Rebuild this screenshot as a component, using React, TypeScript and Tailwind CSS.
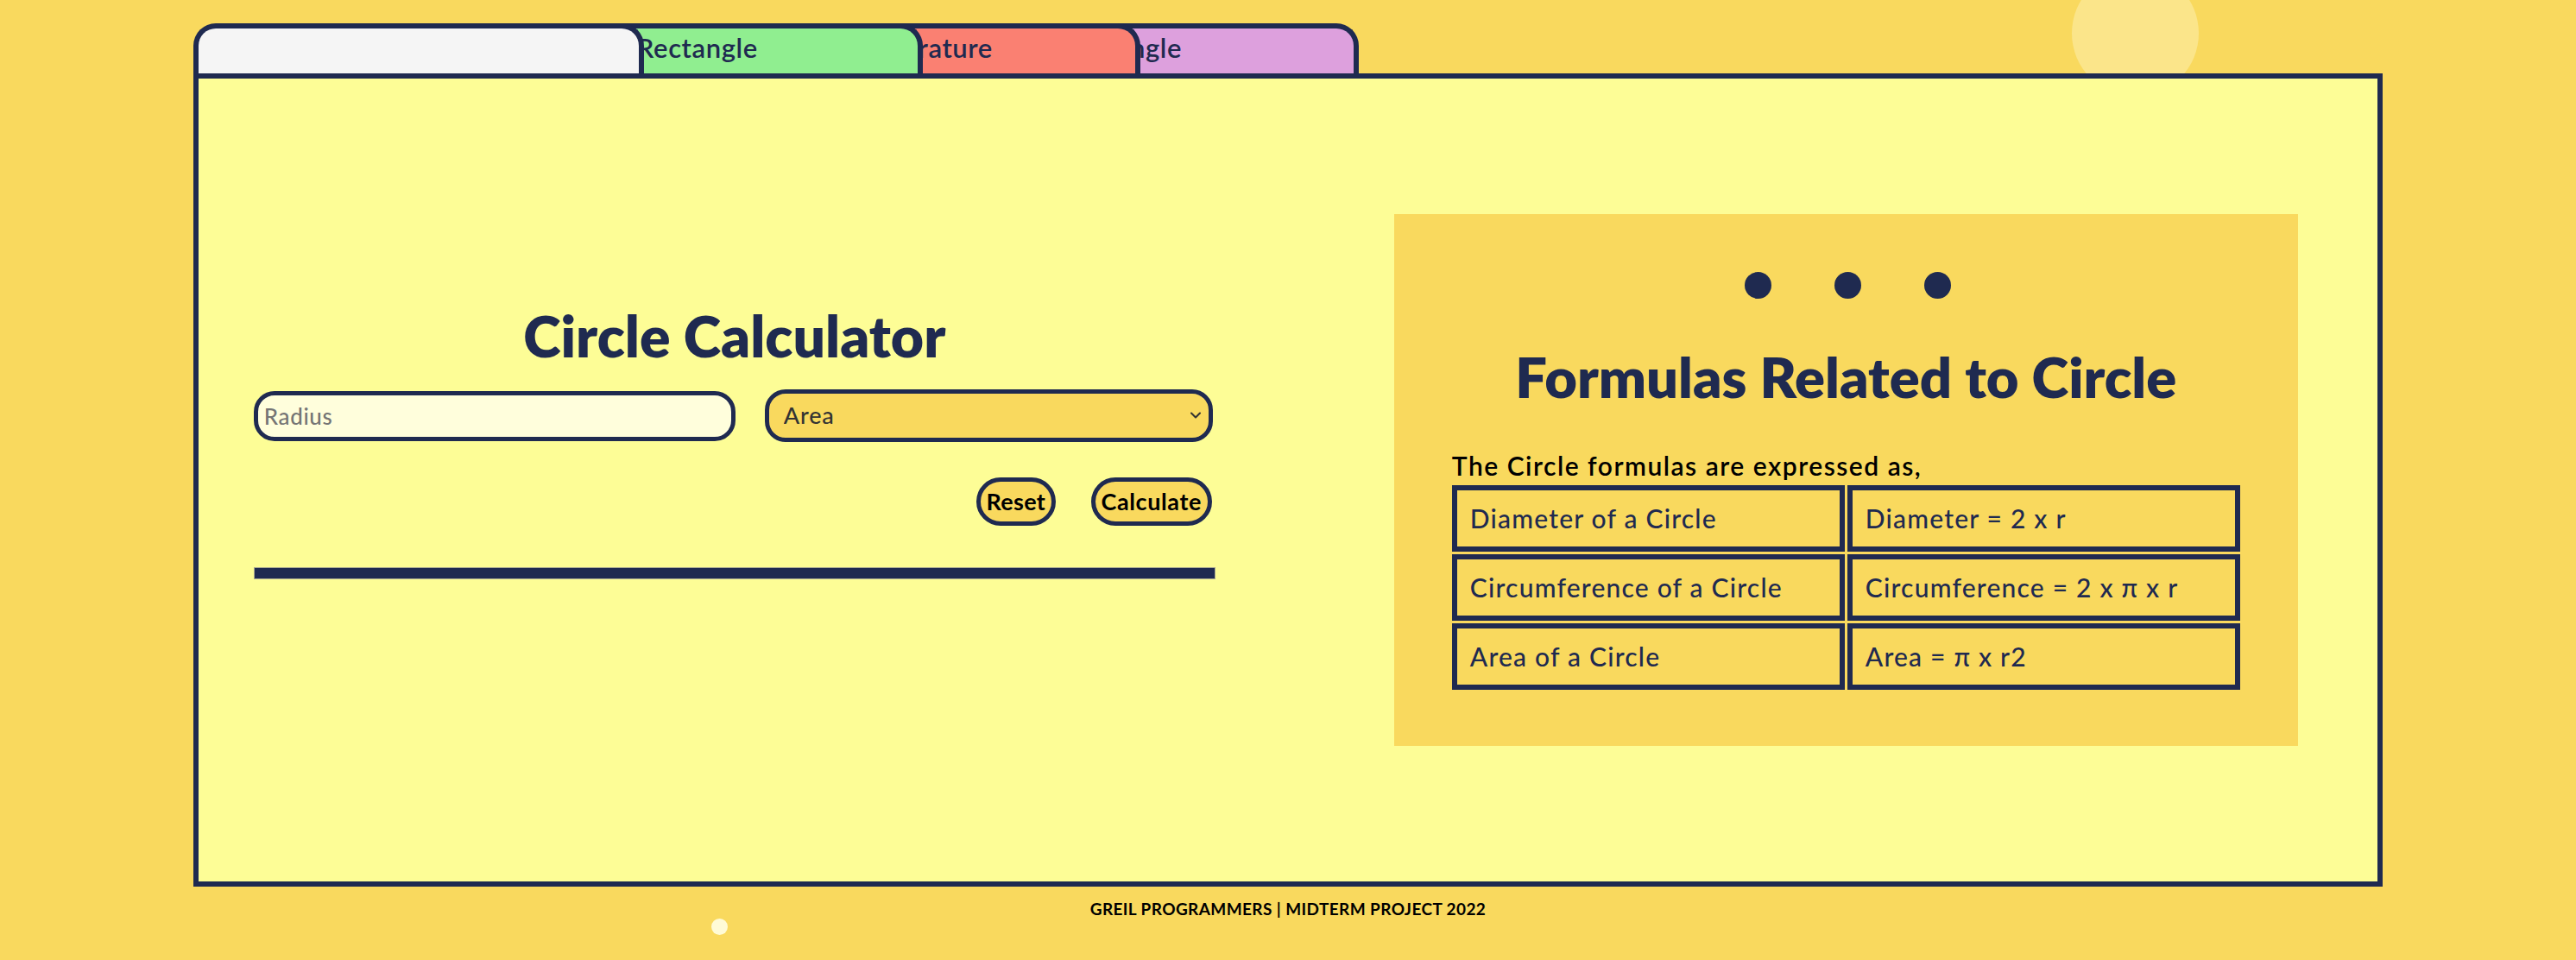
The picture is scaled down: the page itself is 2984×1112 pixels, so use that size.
import { ChevronDown } from "lucide-react";

const FORMULAS = [
  ["Diameter of a Circle", "Diameter = 2 x r"],
  ["Circumference of a Circle", "Circumference = 2 x π x r"],
  ["Area of a Circle", "Area = π x r2"],
];

function Tabs() {
  return (
    <div className="flex h-[58px]">
      <div className="z-40 w-[522px] shrink-0 rounded-t-[26px] border-[6px] border-b-0 border-[#1f2a50] bg-[#f5f5f5]" />
      <div className="z-30 -ml-[199px] flex w-[522px] shrink-0 items-center justify-center rounded-t-[26px] border-[6px] border-b-0 border-[#1f2a50] bg-[#90ee90] pb-[8px] text-[31px] font-semibold tracking-[0.6px] text-[#1f2a50]">
        Rectangle
      </div>
      <div className="z-20 -ml-[270px] flex w-[522px] shrink-0 items-center justify-center rounded-t-[26px] border-[6px] border-b-0 border-[#1f2a50] bg-[#fa8072] pb-[8px] text-[31px] font-semibold tracking-[0.6px] text-[#1f2a50]">
        Temperature
      </div>
      <div className="z-10 -ml-[269px] flex w-[522px] shrink-0 items-center justify-center rounded-t-[26px] border-[6px] border-b-0 border-[#1f2a50] bg-[#dda0dd] pb-[8px] text-[31px] font-semibold tracking-[0.6px] text-[#1f2a50]">
        Triangle
      </div>
    </div>
  );
}

function Calculator() {
  return (
    <div className="flex w-[1114px] shrink-0 flex-col">
      <h1 className="text-center text-[66px] font-extrabold leading-[72px] text-[#1f2a50]">Circle Calculator</h1>
      <div className="mt-[26px] flex items-center gap-[34px]">
        <input
          placeholder="Radius"
          className="h-[58px] w-[558px] rounded-[24px] border-[5px] border-[#1f2a50] bg-[#fffedc] pl-[7px] text-[26px] font-medium tracking-[0.6px] text-[#1f2a50] outline-none placeholder:text-[#757575]"
        />
        <div className="relative w-[519px]">
          <select className="h-[61px] w-full appearance-none rounded-[24px] border-[5px] border-[#1f2a50] bg-[#f9d95e] pl-[17px] text-[27px] font-medium tracking-[0.8px] text-[#333] outline-none">
            <option>Area</option>
            <option>Circumference</option>
            <option>Diameter</option>
          </select>
          <ChevronDown className="pointer-events-none absolute right-[10px] top-[20px] text-[#333]" size={20} strokeWidth={2.5} />
        </div>
      </div>
      <div className="mt-[41px] flex justify-end gap-[41px] pr-[4px]">
        <button className="h-[56px] w-[92px] rounded-full border-[5px] border-[#1f2a50] bg-[#f9d95e] text-[27px] font-bold tracking-[0.3px] text-black">
          Reset
        </button>
        <button className="h-[56px] w-[140px] rounded-full border-[5px] border-[#1f2a50] bg-[#f9d95e] text-[27px] font-bold tracking-[0.6px] text-black">
          Calculate
        </button>
      </div>
      <div className="mt-[48px] h-[14px] border border-[#a8a890] bg-[#1f2a50]" />
      <div className="h-[88px]" />
    </div>
  );
}

function FormulaBox() {
  return (
    <div className="flex h-[616px] w-[1047px] shrink-0 flex-col items-center bg-[#f9d95e] pt-[67px]">
      <div className="flex gap-[73px] pl-[4px]">
        <span className="h-[31px] w-[31px] rounded-full bg-[#1f2a50]" />
        <span className="h-[31px] w-[31px] rounded-full bg-[#1f2a50]" />
        <span className="h-[31px] w-[31px] rounded-full bg-[#1f2a50]" />
      </div>
      <h2 className="mt-[54px] text-[65px] font-extrabold leading-[72px] text-[#1f2a50]">Formulas Related to Circle</h2>
      <div className="mt-[51px] w-[913px]">
        <p className="text-[30px] font-semibold leading-[32px] tracking-[1.5px] text-black">The Circle formulas are expressed as,</p>
        <div className="mt-[7px] grid grid-cols-2 gap-[3px]">
          {FORMULAS.flat().map((cell, i) => (
            <div
              key={i}
              className="flex h-[77px] items-center border-[6px] border-[#1f2a50] pl-[15px] text-[30px] font-medium tracking-[1.2px] text-[#1f2a50]"
            >
              {cell}
            </div>
          ))}
        </div>
      </div>
    </div>
  );
}

export default function App() {
  return (
    <div className="relative min-h-screen overflow-hidden bg-[#f9d95e] pt-[27px] font-['Lato',sans-serif]">
      <div className="absolute left-[2400px] top-[-35px] h-[147px] w-[147px] rounded-full bg-[#fbe58a]" />
      <div className="absolute left-[824px] top-[1064px] h-[19px] w-[19px] rounded-full bg-[#fffbd6]" />
      <div className="relative mx-auto w-[85%]">
        <Tabs />
        <div className="flex h-[942px] items-center border-[6px] border-[#1f2a50] bg-[#fdfd96] pl-[64px]">
          <Calculator />
          <div className="ml-[207px]">
            <FormulaBox />
          </div>
        </div>
        <p className="mt-[12px] text-center text-[19px] font-bold tracking-[0.4px] text-black">GREIL PROGRAMMERS | MIDTERM PROJECT 2022</p>
      </div>
    </div>
  );
}
